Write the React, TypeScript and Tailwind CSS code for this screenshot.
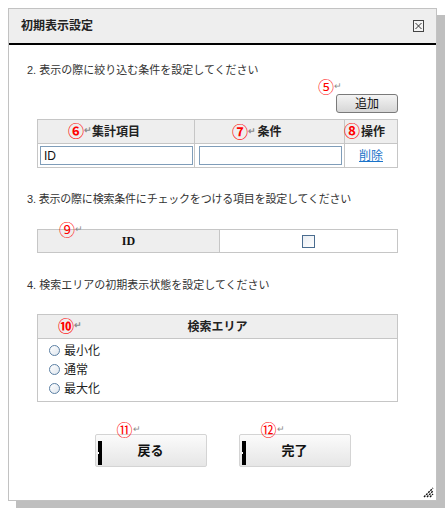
const font = { fontFamily: '"Liberation Sans", "Noto Sans CJK JP", sans-serif' };

function Mark({ n, className, arrow = true }: { n: string; className: string; arrow?: boolean }) {
  return (
    <span className={"absolute flex items-center leading-none pointer-events-none " + className}>
      <span className="text-[16px] text-[#ff0000] leading-none">{n}</span>
      {arrow && <span className="text-[9px] text-[#8a8a8a] leading-none -mt-[3px]">↵</span>}
    </span>
  );
}

function Radio({ label }: { label: string }) {
  return (
    <div className="h-[19px] flex items-center pl-[11px] gap-[4px]">
      <span className="w-[11px] h-[11px] rounded-full border border-[#5b7fa3] bg-gradient-to-br from-white to-[#dfe6ee]" />
      <span className="text-[12px] text-[#222]">{label}</span>
    </div>
  );
}

function BigButton({ label, mark }: { label: string; mark: string }) {
  return (
    <div className="relative w-[112px] h-[33px] border border-[#d4d4d4] rounded-[2px] bg-gradient-to-b from-[#fbfbfb] to-[#e6e6e6] flex items-center justify-center">
      <span className="absolute left-[2px] top-[6px] w-[4px] h-[24px] bg-black">
        <span className="absolute left-0 top-[11px] w-[1px] h-[2px] bg-white" />
      </span>
      <span className="text-[13px] font-bold text-[#111]">{label}</span>
      <Mark n={mark} className="left-[21px] -top-[12px]" />
    </div>
  );
}

export default function App() {
  return (
    <div className="w-[447px] h-[512px] bg-white overflow-hidden" style={font}>
      <div className="ml-[8px] mt-[8px] w-[429px] h-[493px] border border-[#c2c2c2] bg-white shadow-[8px_7px_0_0_#bfbfbf] flex flex-col relative">
        {/* header */}
        <div className="h-[36px] bg-[#eeeeee] border-b-2 border-black flex items-center justify-between pl-[12px] pr-[12px]">
          <span className="text-[12px] font-bold text-[#222]">初期表示設定</span>
          <svg width="11" height="12" viewBox="0 0 11 12">
            <rect x="0.5" y="0.5" width="10" height="11" fill="#f4f4f4" stroke="#444" />
            <path d="M2.5 3 L8.5 9 M8.5 3 L2.5 9" stroke="#333" strokeWidth="1" />
          </svg>
        </div>

        {/* body */}
        <div className="flex flex-col">
          <p className="mt-[18px] pl-[18px] text-[11px] leading-[14px] text-[#333]">2. 表示の際に絞り込む条件を設定してください</p>

          <div className="ml-[28px] w-[361px] flex flex-col">
            <div className="mt-[5px] h-[12px] relative">
              <Mark n="⑤" className="left-[281px] -top-[2px]" />
            </div>
            <div className="flex justify-end">
              <button className="w-[62px] h-[19px] border border-[#7a7a7a] rounded-[3px] bg-gradient-to-b from-[#f4f4f4] to-[#d6d6d6] text-[12px] leading-none text-[#111]">
                追加
              </button>
            </div>

            <table className="mt-[6px] w-[361px] border-collapse border border-[#c6c6c6] text-[12px]">
              <tbody>
                <tr className="h-[24px] bg-[#eeeeee]">
                  <th className="relative w-[157px] border border-[#c6c6c6] font-bold text-[#222] p-0">
                    <Mark n="⑥" className="left-[30px] top-[4px]" />
                    集計項目
                  </th>
                  <th className="relative w-[150px] border border-[#c6c6c6] font-bold text-[#222] p-0">
                    <Mark n="⑦" className="left-[37px] top-[5px]" />
                    条件
                  </th>
                  <th className="relative border border-[#c6c6c6] font-bold text-[#222] p-0">
                    <Mark n="⑧" arrow={false} className="-left-[1px] top-[4px]" />
                    <span className="pl-[4px]">操作</span>
                  </th>
                </tr>
                <tr className="h-[24px] bg-white">
                  <td className="border border-[#c6c6c6] pl-[2px] p-0">
                    <div className="w-[153px] h-[19px] border border-[#7f9db9] flex items-center px-[3px] text-[12px] text-[#111]">ID</div>
                  </td>
                  <td className="border border-[#c6c6c6] pl-[4px] p-0">
                    <div className="w-[143px] h-[19px] border border-[#7f9db9]" />
                  </td>
                  <td className="border border-[#c6c6c6] text-center p-0">
                    <span className="text-[#1a73c9] underline">削除</span>
                  </td>
                </tr>
              </tbody>
            </table>
          </div>

          <p className="mt-[24px] pl-[18px] text-[11px] leading-[14px] tracking-[-0.2px] text-[#333]">3. 表示の際に検索条件にチェックをつける項目を設定してください</p>

          <div className="ml-[28px] w-[361px] mt-[23px] h-[24px] border border-[#c6c6c6] flex relative">
            <div className="w-[182px] bg-[#eeeeee] border-r border-[#c6c6c6] flex items-center justify-center text-[12px] font-bold text-[#111]" style={{ fontFamily: '"Liberation Serif", serif' }}>
              ID
            </div>
            <div className="flex-1 flex items-center justify-center">
              <span className="w-[13px] h-[13px] border border-[#4a6c8f] bg-gradient-to-br from-[#e9edf2] to-white" />
            </div>
            <Mark n="⑨" className="left-[21px] -top-[7px]" />
          </div>

          <p className="mt-[25px] pl-[18px] text-[11px] leading-[14px] text-[#333]">4. 検索エリアの初期表示状態を設定してください</p>

          <div className="ml-[28px] w-[361px] mt-[22px] border border-[#c6c6c6] flex flex-col">
            <div className="relative h-[24px] bg-[#eeeeee] border-b border-[#c6c6c6] flex items-center justify-center text-[12px] font-bold text-[#222]">
              <Mark n="⑩" className="left-[20px] top-[4px]" />
              検索エリア
            </div>
            <div className="pt-[2px] pb-[3px] flex flex-col">
              <Radio label="最小化" />
              <Radio label="通常" />
              <Radio label="最大化" />
            </div>
          </div>

          <div className="mt-[32px] flex justify-center gap-[32px]">
            <BigButton label="戻る" mark="⑪" />
            <BigButton label="完了" mark="⑫" />
          </div>
        </div>

        <svg className="absolute right-[2px] bottom-[2px]" width="11" height="11" viewBox="0 0 11 11">
          <path d="M1 10 L10 1 M4 10 L10 4 M7 10 L10 7" stroke="#111" strokeWidth="1.4" strokeDasharray="2 1" />
        </svg>
      </div>
    </div>
  );
}
